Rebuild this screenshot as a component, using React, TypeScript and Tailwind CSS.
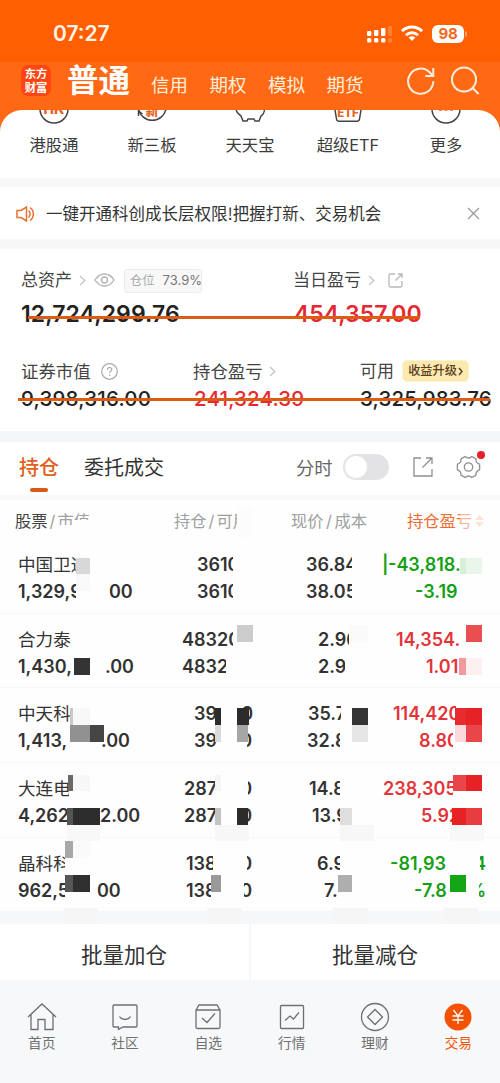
import type { ReactNode } from 'react';
import { clsx } from 'clsx';

interface Piece {
  text: string;
  gap: number;
  width: number;
  fromEnd?: boolean;
}

interface Holding {
  id: number;
  tone: 'up' | 'down';
  // four columns, each with an upper and a lower line
  cells: [Piece[], Piece[]][];
}

const p = (text: string, gap: number, width: number, fromEnd = false): Piece => ({ text, gap, width, fromEnd });

const holdings: Holding[] = [
  {
    id: 1,
    tone: 'down',
    cells: [
      [[p('中国卫通', 18, 58)], [p('1,329,9', 18, 58), p('00', 33, 30)]],
      [[p('3610', 27, 36)], [p('3610', 27, 36)]],
      [[p('36.84', 16, 46)], [p('38.05', 16, 46)]],
      [[p('|', 2, 5), p('-43,818.', 1, 72)], [p('-3.19', 35, 49)]],
    ],
  },
  {
    id: 2,
    tone: 'up',
    cells: [
      [[p('合力泰', 18, 56)], [p('1,430,', 18, 56), p('.00', 31, 32)]],
      [[p('48320', 12, 51)], [p('4832', 12, 44)]],
      [[p('2.96', 28, 31)], [p('2.98', 28, 27)]],
      [[p('14,354.', 16, 65)], [p('1.01', 46, 34)]],
    ],
  },
  {
    id: 3,
    tone: 'up',
    cells: [
      [[p('中天科', 18, 53)], [p('1,413,', 18, 52), p('.00', 31, 32)]],
      [[p('39', 24, 24), p('0', 24, 11, true)], [p('39', 24, 24), p('0', 29, 5, true)]],
      [[p('35.7', 18, 33)], [p('32.8', 17, 33)]],
      [[p('114,420', 13, 63)], [p('8.80', 39, 34)]],
    ],
  },
  {
    id: 4,
    tone: 'up',
    cells: [
      [[p('大连电', 18, 51)], [p('4,262', 18, 50), p('2.00', 32, 40)]],
      [[p('287', 14, 31), p('0', 33, 4, true)], [p('287', 14, 31), p('0', 31, 6, true)]],
      [[p('14.8', 19, 31)], [p('13.9', 22, 28)]],
      [[p('238,305', 3, 70)], [p('5.92', 41, 31)]],
    ],
  },
  {
    id: 5,
    tone: 'down',
    cells: [
      [[p('晶科科', 18, 47)], [p('962,5', 18, 47), p('00', 32, 26)]],
      [[p('138', 16, 27), p('0', 34, 5, true)], [p('138', 16, 25), p('0', 33, 8, true)]],
      [[p('6.9', 27, 23)], [p('7.', 34, 16)]],
      [[p('-81,93', 10, 59), p('4', 31, 6, true)], [p('-7.8', 34, 34), p('%', 31, 7, true)]],
    ],
  },
];

// privacy mosaic over the table: x, y, width, height, colour
const mosaic: [number, number, number, number, string][] = [
  [60, 25, 14, 12, '#fefefe'],
  [74, 20, 19, 17, '#fefefe'],
  [237, 8, 16, 30, '#fcfcfc'],
  [460, 10, 12, 22, '#fefefe80'],
  [76, 58, 14, 16, '#d8d8d8'],
  [76, 74, 14, 17, '#f9f9f9'],
  [460, 58, 6, 16, '#d8efd8'],
  [466, 58, 16, 16, '#e9f6e9'],
  [237, 125, 16, 17, '#cccccc'],
  [350, 125, 18, 17, '#fafafa'],
  [466, 125, 16, 17, '#e94f50'],
  [74, 158, 16, 17, '#343434'],
  [459, 158, 7, 17, '#f2999d'],
  [466, 158, 16, 17, '#fdf0f1'],
  [70, 208, 3, 17, '#c8c8c8'],
  [73, 208, 17, 17, '#f8f8f8'],
  [70, 225, 20, 17, '#919191'],
  [90, 225, 14, 17, '#454545'],
  [215, 208, 6, 17, '#2c2c2c'],
  [215, 225, 6, 17, '#dadada'],
  [237, 208, 12, 17, '#2c2c2c'],
  [237, 225, 11, 17, '#a6a6a6'],
  [352, 208, 16, 17, '#343434'],
  [352, 225, 16, 17, '#e6e6e6'],
  [455, 208, 11, 17, '#e82b2d'],
  [466, 208, 16, 17, '#e62224'],
  [455, 225, 11, 17, '#fbdadd'],
  [466, 225, 16, 17, '#e94649'],
  [68, 275, 5, 16, '#686868'],
  [73, 275, 17, 16, '#f7f7f7'],
  [67, 308, 6, 17, '#555555'],
  [73, 308, 27, 17, '#2d2d2d'],
  [67, 325, 33, 16, '#f8f8f8'],
  [215, 275, 6, 16, '#f5f5f5'],
  [215, 308, 6, 17, '#c3c3c3'],
  [237, 308, 11, 17, '#2c2c2c'],
  [215, 325, 34, 16, '#f7f7f7'],
  [340, 308, 12, 17, '#dedede'],
  [340, 325, 34, 16, '#f7f7f7'],
  [453, 275, 13, 16, '#e94649'],
  [466, 275, 16, 16, '#e62224'],
  [452, 308, 14, 17, '#e62224'],
  [466, 308, 16, 17, '#e93c3f'],
  [450, 325, 34, 16, '#f8f8f8'],
  [65, 341, 8, 17, '#a8a8a8'],
  [73, 341, 17, 17, '#fafafa'],
  [65, 375, 8, 17, '#565656'],
  [73, 375, 17, 17, '#303030'],
  [211, 375, 10, 17, '#999999'],
  [338, 375, 14, 17, '#aeaeae'],
  [450, 375, 16, 17, '#14a514'],
  [64, 408, 34, 16, '#f6f6f6'],
  [207, 408, 35, 16, '#f6f6f6'],
  [333, 408, 35, 16, '#f6f6f6'],
  [443, 408, 35, 16, '#f6f6f6'],
];

function Line({ pieces }: { pieces: Piece[] }) {
  return (
    <div className="flex h-[27px] leading-[27px]">
      {pieces.map((piece, i) => (
        <span
          key={i}
          className={clsx('flex shrink-0 overflow-hidden whitespace-nowrap', piece.fromEnd && 'justify-end')}
          style={{ marginLeft: piece.gap, width: piece.width }}
        >
          <span>{piece.text}</span>
        </span>
      ))}
    </div>
  );
}

function Chevron() {
  return (
    <svg className="w-[7px] h-[11px]" viewBox="0 0 7 11" fill="none" stroke="#c4c4c4" strokeWidth="1.3">
      <path d="M1 1l4.8 4.5L1 10" />
    </svg>
  );
}

function QuickItem({ label, children }: { label: string; children: ReactNode }) {
  return (
    <div className="flex flex-col items-center">
      <div className="h-[15px] overflow-hidden">
        <svg width="40" height="15" viewBox="0 0 40 15" fill="none" stroke="#444" strokeWidth="1.5">
          {children}
        </svg>
      </div>
      <span className="mt-[10px] text-[16.3px] leading-[20px] text-[#3c3c3c] whitespace-nowrap">{label}</span>
    </div>
  );
}

function NavItem({ label, active, children }: { label: string; active?: boolean; children: ReactNode }) {
  return (
    <div className={clsx('flex flex-col items-center', active ? 'text-[#f0550a]' : 'text-[#6f6f6f]')}>
      <svg width="30" height="30" viewBox="0 0 30 30" fill="none" stroke="currentColor" strokeWidth="1.3">
        {children}
      </svg>
      <span className="mt-px text-[13.7px] leading-[20px]">{label}</span>
    </div>
  );
}

export default function App() {
  return (
    <div className="w-[500px] h-[1083px] overflow-hidden bg-white font-[Inter,'Noto_Sans_CJK_SC',sans-serif] text-[#333]">
      {/* Status bar */}
      <div className="h-[62px] bg-[#ff5f00] pl-[53px] pr-[33px] pt-[5px] flex items-center justify-between text-[#fff4ea]">
        <span className="text-[21px] font-semibold">07:27</span>
        <div className="flex items-center">
          <svg width="26" height="18" viewBox="0 0 26 18" fill="#fff">
            <rect x="1" y="6" width="4.4" height="5" rx="1" />
            <rect x="8" y="5" width="4.4" height="6" rx="1" />
            <rect x="15" y="3" width="4.4" height="8" rx="1" />
            <rect x="22" y="1" width="4.2" height="10" rx="1" opacity=".2" />
            <rect x="1" y="13" width="4.4" height="4.4" rx="1.5" />
            <rect x="8" y="13" width="4.4" height="4.4" rx="1.5" />
            <rect x="15" y="13" width="4.4" height="4.4" rx="1.5" />
            <rect x="22" y="13" width="4.2" height="4.4" rx="1.5" opacity=".2" />
          </svg>
          <svg className="ml-[9px]" width="22" height="17" viewBox="0 0 22 17" fill="none" stroke="#fff" strokeWidth="3">
            <path d="M1 6.2a14.2 14.2 0 0 1 20 0" />
            <path d="M5 10.3a8.6 8.6 0 0 1 12 0" />
            <path d="M7.6 12.6a4.9 4.9 0 0 1 6.8 0L11 16z" fill="#fff" stroke="none" />
          </svg>
          <div className="ml-[9px] w-8 h-[18px] rounded-[6px] bg-white text-[#f26a1c] text-[15px] leading-[18px] tracking-[-0.3px] font-bold text-center">98</div>
          <div className="ml-px w-[2px] h-[6px] rounded-r bg-white/40" />
        </div>
      </div>

      {/* Account tabs */}
      <div className="h-[48px] bg-[#ff6914] flex pl-[21px] text-[#ffeedd]">
        <div className="mt-[3px] w-[30px] h-[31px] rounded-[7px] bg-[#ff4612] text-white text-[11.3px] font-bold text-center pt-[2px] font-['Noto_Sans_CJK_SC',sans-serif]">
          <div className="h-[13.5px] leading-[13.5px]">东方</div>
          <div className="h-[13.5px] leading-[13.5px]">财富</div>
        </div>
        <span className="ml-4 w-[84px] text-[31.5px] leading-[38px] font-bold text-white">普通</span>
        <div className="flex gap-[21.5px] text-[18.5px] leading-[46px] whitespace-nowrap">
          <span>信用</span>
          <span>期权</span>
          <span>模拟</span>
          <span>期货</span>
        </div>
        <svg className="ml-[42px] mt-[4px]" width="30" height="30" viewBox="0 0 30 30" fill="none" stroke="#ffeedd" strokeWidth="2">
          <path d="M27.3 15.3A12.6 12.6 0 1 1 23.6 6.3l3 3" />
          <path d="M27.3 2v8h-8" />
        </svg>
        <svg className="ml-[14px] mt-[4px]" width="30" height="30" viewBox="0 0 30 30" fill="none" stroke="#ffeedd" strokeWidth="2">
          <circle cx="14" cy="13.5" r="12" />
          <path d="M22.5 22l6.2 6" />
        </svg>
      </div>

      {/* Quick entries */}
      <div className="bg-[#ff6914]">
        <div className="h-[68px] rounded-t-[22px] bg-white px-[5px] grid grid-cols-5">
          <QuickItem label="港股通">
            <circle cx="20" cy="-1" r="14" />
            <text x="20" y="4" textAnchor="middle" fontSize="14" fontWeight="800" fill="#e8641f" stroke="none">HK</text>
          </QuickItem>
          <QuickItem label="新三板">
            <path d="M6.5-1a14 14 0 0 0 27.5 0" />
            <path d="M6.500 6V1l4 3" />
            <text x="20" y="4.500" textAnchor="middle" fontSize="13" fontWeight="800" fill="#e8641f" stroke="none">新</text>
          </QuickItem>
          <QuickItem label="天天宝">
            <path d="M6 0c1 3 3 4 5 6l2 5h4l1-2h6l1 2h4l2-5c2-1 3-3 3.500-6" />
          </QuickItem>
          <QuickItem label="超级ETF">
            <path d="M7 0l1.500 9q.3 2.200 2.500 2.200h18q2.200 0 2.500-2.200L33 0" />
            <text x="20" y="6.500" textAnchor="middle" fontSize="11.500" fontWeight="800" fill="#e8641f" stroke="none">ETF</text>
          </QuickItem>
          <QuickItem label="更多">
            <circle cx="20" cy="-1" r="14" />
            <path d="M13 0h3m2.500 0h3m2.500 0h3" stroke="#e8641f" />
          </QuickItem>
        </div>
      </div>

      {/* Notice */}
      <div className="h-[71px] border-t-[9px] border-b-[10px] border-[#f7f7f7] pl-4 pr-5 pt-px flex items-center">
        <svg width="20" height="16" viewBox="0 0 20 16" fill="none" stroke="#e8702e" strokeWidth="1.500">
          <path d="M1 4.500h4L10.500 1v14L5 11.500H1z" />
          <path d="M12.500 4.500a4.500 4.500 0 0 1 0 7M14 1.500a8 8 0 0 1 0 13" />
        </svg>
        <span className="ml-[10px] text-[16.5px] text-[#333] whitespace-nowrap font-['Noto_Sans_CJK_SC',sans-serif]">
          一键开通科创成长层权限!把握打新、交易机会
        </span>
        <svg className="ml-auto" width="13" height="13" viewBox="0 0 13 13" stroke="#999" strokeWidth="1.300">
          <path d="M1 1l11 11M12 1L1 12" />
        </svg>
      </div>

      {/* Assets */}
      <div className="relative h-[182px] pt-[18px] pl-[21px]">
        <div className="flex">
          <div className="w-[272px]">
            <div className="h-[26px] flex items-center">
              <span className="mt-[2px] text-[17px] text-[#444]">总资产</span>
              <span className="ml-[7px]"><Chevron /></span>
              <svg className="ml-[8px]" width="21" height="14" viewBox="0 0 21 14" fill="none" stroke="#b5b5b5" strokeWidth="1.400">
                <path d="M1 7c5-8 14-8 19 0-5 8-14 8-19 0z" />
                <circle cx="10.500" cy="7" r="3" />
              </svg>
              <div className="ml-[9px] w-[78px] h-[24px] mt-[2px] border border-[#ececec] bg-[#f8f8f8] rounded-[3px] flex items-center pl-[5px] whitespace-nowrap text-[12.300px]">
                <span className="text-[#aaa]">仓位</span>
                <span className="ml-[8px] text-[13px] text-[#777]">73.9%</span>
              </div>
            </div>
            <div className="mt-[7px] text-[23px] leading-[28px] tracking-[0.1px] font-semibold text-[#222]">12,724,299.76</div>
          </div>
          <div>
            <div className="h-[26px] flex items-center">
              <span className="mt-[2px] text-[17px] text-[#444]">当日盈亏</span>
              <span className="ml-[7px]"><Chevron /></span>
              <svg className="ml-[13px]" width="15" height="15" viewBox="0 0 15 15" fill="none" stroke="#b8b8b8" strokeWidth="1.300">
                <path d="M7 1H2.500Q1 1 1 2.500v10Q1 14 2.500 14h10q1.500 0 1.500-1.500V8M10 1h4v4M14 1L7.500 7.500" />
              </svg>
            </div>
            <div className="mt-[7px] ml-px text-[23px] leading-[28px] font-semibold text-[#e52a33]">454,357.00</div>
          </div>
        </div>
        <div className="mt-[30px] flex">
          <div className="w-[172px]">
            <div className="h-[26px] flex items-center">
              <span className="mt-[2px] text-[17.4px] text-[#444]">证券市值</span>
              <svg className="ml-[10px]" width="17" height="17" viewBox="0 0 17 17" fill="none" stroke="#aaa" strokeWidth="1.200">
                <circle cx="8.500" cy="8.500" r="7.800" />
                <path d="M6.300 6.800c0-3 4.500-3 4.500-.4 0 1.700-2.200 1.700-2.200 3.600M8.600 11.500v1.400" />
              </svg>
            </div>
            <div className="mt-px text-[20.5px] leading-[28px] tracking-[0.2px] font-medium text-[#222]">9,398,316.00</div>
          </div>
          <div className="w-[167px]">
            <div className="h-[26px] flex items-center">
              <span className="mt-[2px] text-[17.4px] text-[#444]">持仓盈亏</span>
              <span className="ml-[6px]"><Chevron /></span>
            </div>
            <div className="mt-px ml-px text-[20.5px] leading-[28px] tracking-[0.15px] font-medium text-[#e52a33]">241,324.39</div>
          </div>
          <div>
            <div className="h-[26px] flex items-center">
              <span className="mt-[2px] text-[17px] text-[#444]">可用</span>
              <div className="ml-[8px] h-[22px] w-[67px] rounded-[5px] border border-[#fdf3c8] bg-[#faeaaf] text-[12.200px] leading-[20px] font-medium text-[#5c3a1c] flex items-center justify-center whitespace-nowrap">
                收益升级
                <svg className="ml-px" width="5" height="9" viewBox="0 0 5 9" fill="none" stroke="currentColor" strokeWidth="1.400">
                  <path d="M1 1l3 3.500L1 8" />
                </svg>
              </div>
            </div>
            <div className="mt-px text-[20.5px] leading-[28px] tracking-[0.15px] font-medium text-[#222]">3,325,983.76</div>
          </div>
        </div>
        {/* hand-drawn strokes over the amounts */}
        <div className="absolute left-[28px] top-[67px] w-[392px] h-[3px] bg-[#db5c12]" />
        <div className="absolute left-[18px] top-[149px] w-[472px] h-[3px] bg-[#db5c12]" />
      </div>

      {/* Position tabs */}
      <div className="h-[69px] border-t-[11px] border-t-[#f5f6f8] border-b-[5px] border-b-[#f9f9f9] flex pl-[19px] pr-[19px]">
        <div className="flex flex-col items-center">
          <span className="mt-[12px] text-[20px] leading-[28px] font-medium text-[#e06020]">持仓</span>
          <div className="mt-[6px] w-[18px] h-[4px] rounded-full bg-[#d85a16]" />
        </div>
        <span className="ml-[25px] mt-[12px] text-[20px] leading-[28px] text-[#333]">委托成交</span>
        <span className="ml-[132px] mt-[12px] text-[18.3px] leading-[28px] text-[#666]">分时</span>
        <div className="ml-[10px] mt-[12px] w-[46px] h-[26px] rounded-full bg-[#e3e3e5] p-[2px]">
          <div className="w-[22px] h-[22px] rounded-full bg-white" />
        </div>
        <svg className="ml-[24px] mt-[15px]" width="20" height="20" viewBox="0 0 20 20" fill="none" stroke="#8f8f8f" strokeWidth="1.300">
          <path d="M8 1H1v18h18v-7M13 1h6v6M19 1l-9.500 9.500" />
        </svg>
        <div className="relative ml-[23px] mt-[13px]">
          <svg width="25" height="24" viewBox="0 0 25 24" fill="none" stroke="#8f8f8f" strokeWidth="1.300" strokeLinejoin="round">
            <path d="M9.200 1.500q3.300 3 6.600 0l4.200 2.400q-.5 4 3.600 5.300v5.600q-4.100 1.300-3.600 5.300l-4.200 2.400q-3.300-3-6.600 0L5 20.100q.5-4-3.600-5.300V9.200Q5.500 7.900 5 3.900z" />
            <circle cx="12.500" cy="12" r="4.200" />
          </svg>
          <div className="absolute left-[21px] -top-[4px] w-2 h-2 rounded-full bg-[#ea2028]" />
        </div>
      </div>

      {/* Holdings table */}
      <div className="relative h-[412px] bg-[#fefefe]">
        <div className="h-[39px] grid grid-cols-[170px_120px_90px_120px] text-[16.300px] leading-[42px] text-[#a0a0a0] whitespace-nowrap">
          <span className="pl-[15px]"><span className="text-[#444]">股票</span><span className="mx-[2px]">/</span>市值</span>
          <span className="pl-[4px]">持仓<span className="mx-[2px]">/</span><span className="inline-block w-[28px] h-[39px] overflow-hidden align-top">可用</span></span>
          <span className="pl-px">现价<span className="mx-[2.500px]">/</span>成本</span>
          <span className="pl-[27px] text-[#ed6c32] flex items-center">
            持仓盈亏
            <svg className="ml-[3px]" width="9" height="12" viewBox="0 0 9 12" fill="#fbe3d6"><path d="M4.500 0L9 5H0zM0 7h9l-4.500 5z" /></svg>
          </span>
        </div>
        {holdings.map((row) => (
          <div
            key={row.id}
            className="h-[74.7px] pt-[12px] border-b border-[#f6f6f6] last:border-0 grid grid-cols-[170px_120px_90px_120px] text-[18px] font-semibold"
          >
            {row.cells.map(([upper, lower], col) => (
              <div key={col} className={clsx(col === 3 && (row.tone === 'up' ? 'text-[#e3343a]' : 'text-[#14a014]'))}>
                <div className={clsx(col === 0 && 'font-normal text-[17.600px]')}>
                  <Line pieces={upper} />
                </div>
                <Line pieces={lower} />
              </div>
            ))}
          </div>
        ))}
        {mosaic.map(([left, top, width, height, background], i) => (
          <div key={i} className="absolute" style={{ left, top, width, height, background }} />
        ))}
      </div>

      {/* Batch actions */}
      <div className="h-[68px] border-t-[12px] border-[#f6f7f9] bg-[#f6f7f9] grid grid-cols-2 gap-[2px] text-[21.500px] text-[#333]">
        <button className="bg-white pt-[7px] pr-px">批量加仓</button>
        <button className="bg-white pt-[7px] pr-px">批量减仓</button>
      </div>

      {/* Bottom navigation */}
      <div className="h-[103px] bg-[#f7f8fa] pt-[22px] grid grid-cols-6">
        <NavItem label="首页">
          <path d="M1 15L15 2l14 13M4 12.500V27.500h7v-10h7v10h8V12.500" />
        </NavItem>
        <NavItem label="社区">
          <path d="M4 3h22q1 0 1 1v20q0 1-1 1H13l-4.500 2.500V25H4q-1 0-1-1V4q0-1 1-1z" />
          <path d="M9.500 14.500c2.500 4 8.500 4 11 0" />
        </NavItem>
        <NavItem label="自选">
          <path d="M3 8l3-5h18l3 5v17q0 1.500-1.500 1.500h-21Q3 26.500 3 25zM3 8h24" />
          <path d="M9 16l5 4.500 8-9" />
        </NavItem>
        <NavItem label="行情">
          <rect x="3.500" y="3.500" width="23" height="23" rx="1" />
          <path d="M8 18.500l5-4.500 3.500 3 5.500-6.500" />
        </NavItem>
        <NavItem label="理财">
          <circle cx="15" cy="15" r="13.500" />
          <path d="M15 7.500l7.500 7.500-7.500 7.500L7.500 15z" />
        </NavItem>
        <NavItem label="交易" active>
          <circle cx="15" cy="15" r="13.500" fill="#f35205" stroke="none" />
          <path d="M10.500 8l4.500 6 4.500-6M9.500 14h11M9.500 18h11M15 14v8" stroke="#fff" />
        </NavItem>
      </div>
    </div>
  );
}
